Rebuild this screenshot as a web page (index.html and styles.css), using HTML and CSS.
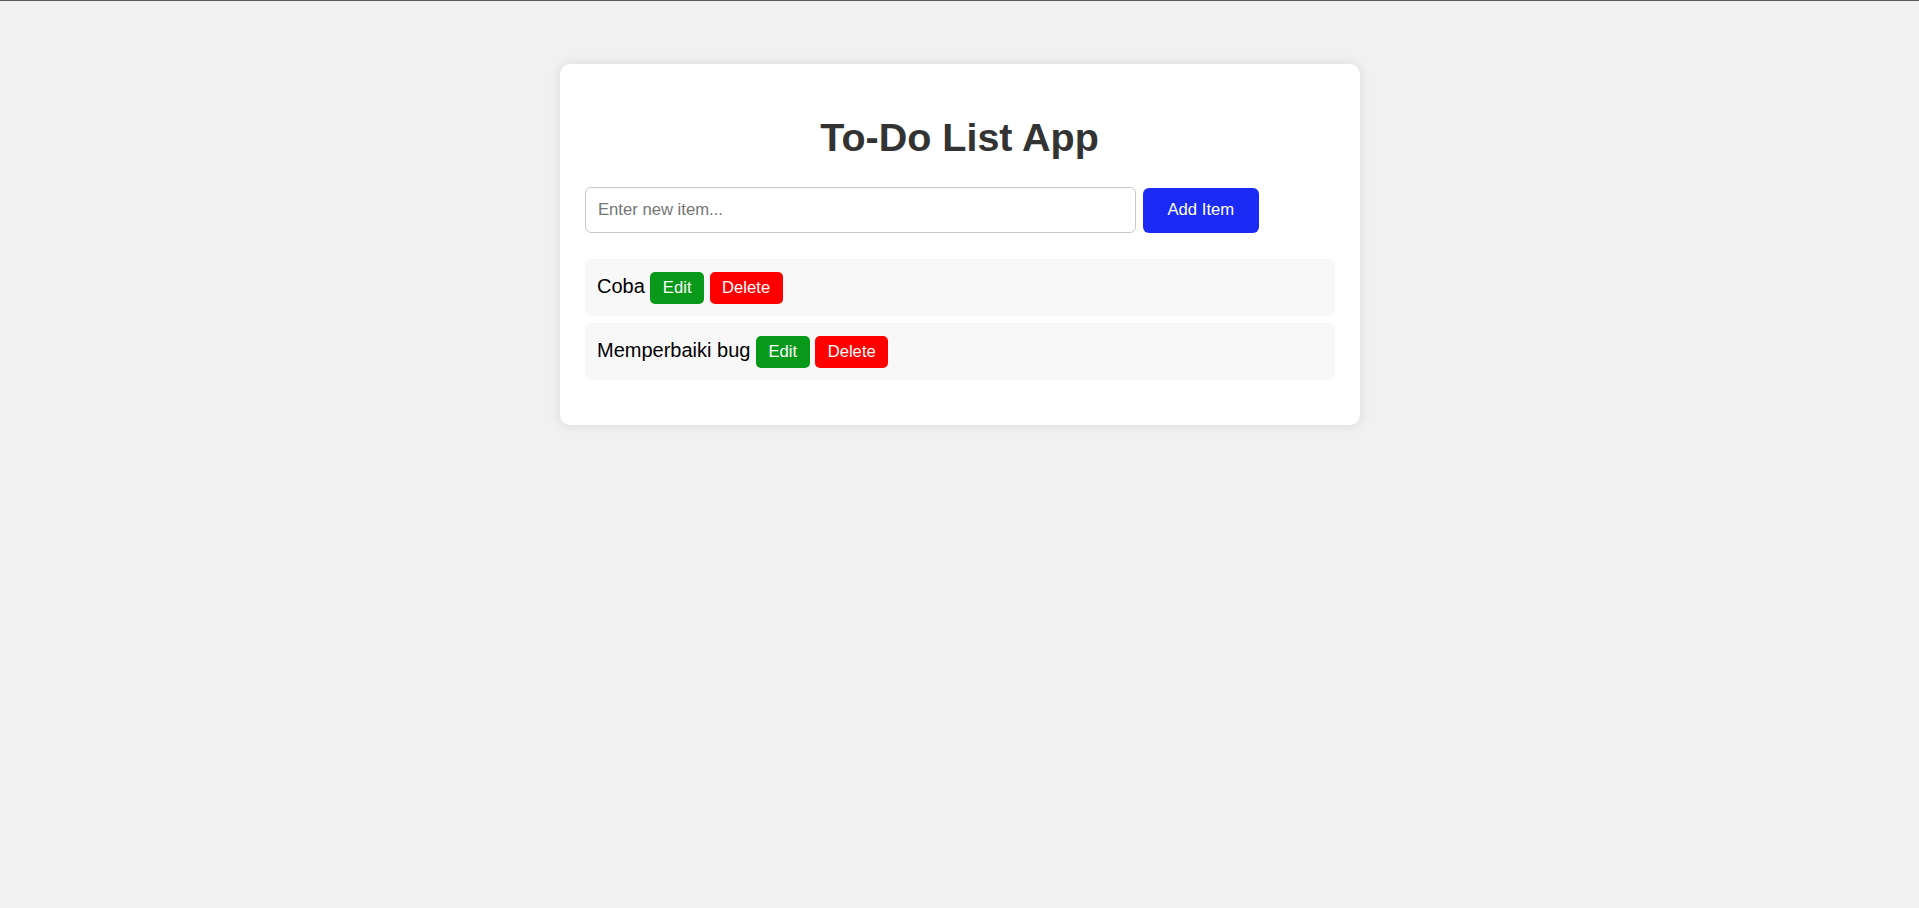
FILE: index.html
```html
<!DOCTYPE html>
<html lang="en">
<head>
<meta charset="utf-8">
<title>To-Do List App</title>
<link rel="stylesheet" href="styles.css">
</head>
<body>
<div class="card">
  <h1 class="title">To-Do List App</h1>
  <div class="add-row">
    <input class="new-item" type="text" placeholder="Enter new item...">
    <button class="btn btn-add">Add Item</button>
  </div>
  <ul class="list">
    <li class="item"><span class="item-text">Coba</span><button class="btn btn-small btn-edit">Edit</button><button class="btn btn-small btn-delete">Delete</button></li>
    <li class="item"><span class="item-text">Memperbaiki bug</span><button class="btn btn-small btn-edit">Edit</button><button class="btn btn-small btn-delete">Delete</button></li>
  </ul>
</div>
</body>
</html>
```

FILE: styles.css
```css
html, body {
  margin: 0;
  padding: 0;
}
body {
  background: #f1f1f1;
  border-top: 1px solid #5a5a5a;
  font-family: "Liberation Sans", Arial, sans-serif;
  min-height: 907px;
  box-sizing: border-box;
}
.card {
  width: 800px;
  box-sizing: border-box;
  margin: 63px auto 0;
  padding: 25px;
  background: #ffffff;
  border-radius: 10px;
  box-shadow: 0 0 12px rgba(0, 0, 0, 0.1);
}
.title {
  margin: 26px 0 27px;
  font-size: 39.5px;
  font-weight: bold;
  color: #333333;
  text-align: center;
  line-height: 45px;
}
.add-row {
  display: flex;
  align-items: center;
  gap: 7px;
}
.new-item {
  width: 551px;
  height: 46px;
  box-sizing: border-box;
  padding: 0 12.5px;
  border: 1px solid #c8c8c8;
  border-radius: 6px;
  font-family: "Liberation Sans", Arial, sans-serif;
  font-size: 16.67px;
  color: #222;
  outline: none;
}
.new-item::placeholder {
  color: #757575;
}
.btn {
  border: none;
  color: #ffffff;
  font-family: "Liberation Sans", Arial, sans-serif;
  font-size: 16.67px;
  cursor: pointer;
}
.btn-add {
  height: 45px;
  padding: 0 25px;
  background: #1b2af5;
  border-radius: 6px;
}
.list {
  list-style: none;
  margin: 26px 0 20px;
  padding: 0;
  display: flex;
  flex-direction: column;
  gap: 7px;
}
.item {
  display: flex;
  align-items: baseline;
  gap: 5.5px;
  padding: 12.5px;
  background: #f8f8f8;
  border-radius: 6px;
  font-size: 20px;
  color: #000000;
}
.btn-small {
  height: 32px;
  padding: 0 12.5px;
  border-radius: 5px;
  line-height: 32px;
}
.btn-edit {
  background: #08991a;
}
.btn-delete {
  background: #ff0000;
}
```
